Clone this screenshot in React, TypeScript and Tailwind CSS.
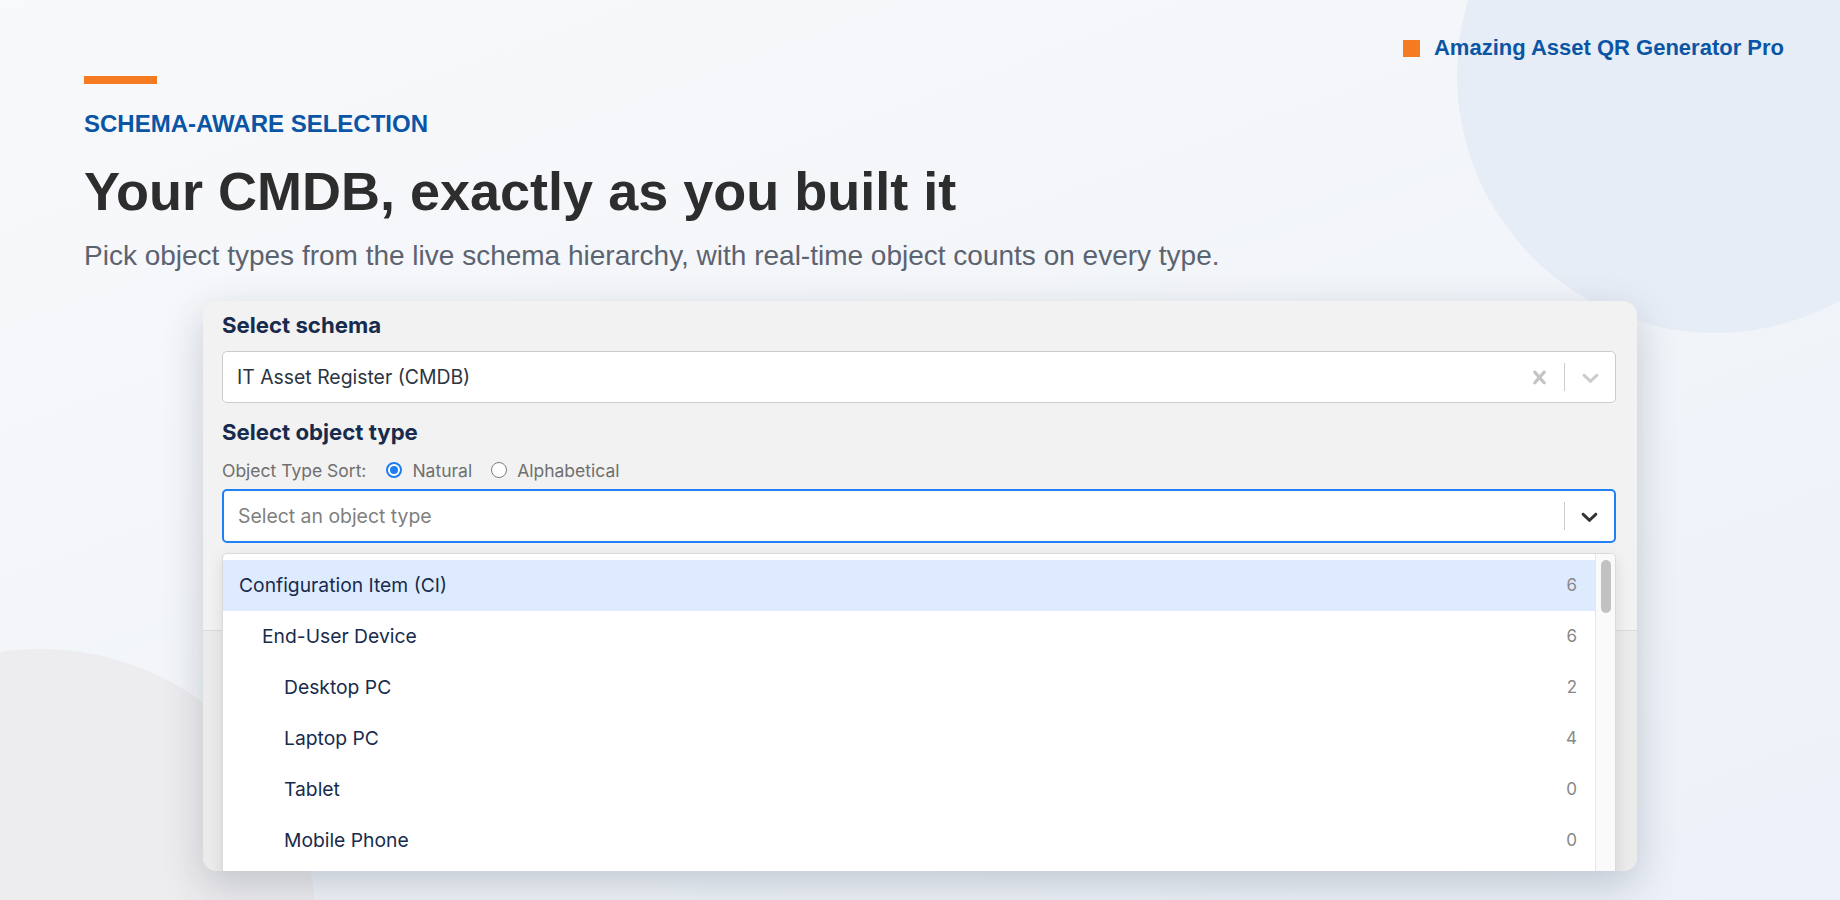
import React from 'react';

interface ObjectTypeOption {
    name: string;
    level: number;
    count: number;
}

const objectTypes: ObjectTypeOption[] = [
    { name: 'Configuration Item (CI)', level: 0, count: 6 },
    { name: 'End-User Device', level: 1, count: 6 },
    { name: 'Desktop PC', level: 2, count: 2 },
    { name: 'Laptop PC', level: 2, count: 4 },
    { name: 'Tablet', level: 2, count: 0 },
    { name: 'Mobile Phone', level: 2, count: 0 },
];

// indent per hierarchy level, written out so Tailwind picks them up
const levelPadding = ['pl-[16px]', 'pl-[39px]', 'pl-[61px]'];

function CrossIcon({ className }: { className?: string }) {
    return (
        <svg viewBox="0 0 20 20" className={className} fill="currentColor" aria-hidden="true">
            <path d="M14.348 14.849c-0.469 0.469-1.229 0.469-1.697 0l-2.651-3.030-2.651 3.029c-0.469 0.469-1.229 0.469-1.697 0-0.469-0.469-0.469-1.229 0-1.697l2.758-3.15-2.759-3.152c-0.469-0.469-0.469-1.228 0-1.697s1.228-0.469 1.697 0l2.652 3.031 2.651-3.031c0.469-0.469 1.228-0.469 1.697 0s0.469 1.229 0 1.697l-2.758 3.152 2.758 3.15c0.469 0.469 0.469 1.229 0 1.698z" />
        </svg>
    );
}

function ChevronIcon({ className }: { className?: string }) {
    return (
        <svg viewBox="0 0 20 20" className={className} fill="currentColor" aria-hidden="true">
            <path d="M4.516 7.548c0.436-0.446 1.043-0.481 1.576 0l3.908 3.747 3.908-3.747c0.533-0.481 1.141-0.446 1.574 0 0.436 0.445 0.408 1.197 0 1.615-0.406 0.418-4.695 4.502-4.695 4.502-0.217 0.223-0.502 0.335-0.787 0.335s-0.57-0.112-0.789-0.335c0 0-4.287-4.084-4.695-4.502s-0.436-1.17 0-1.615z" />
        </svg>
    );
}

function Radio({ checked, label }: { checked: boolean; label: string }) {
    return (
        <label className="flex items-center gap-[10px]">
            {checked ? (
                <span className="flex h-[16px] w-[16px] items-center justify-center rounded-full border-2 border-[#1f7cf2] bg-white">
                    <span className="h-[8px] w-[8px] rounded-full bg-[#1f7cf2]" />
                </span>
            ) : (
                <span className="h-[16px] w-[16px] rounded-full border-[1.5px] border-[#7d7d7d] bg-white" />
            )}
            <span>{label}</span>
        </label>
    );
}

function SchemaSelect() {
    return (
        <div className="flex h-[52px] items-center rounded-[5px] border border-[#cccccc] bg-white">
            <div className="flex-1 pl-[14px] text-[19.4px] leading-none text-[#2b3441]">
                IT Asset Register (CMDB)
            </div>
            <div className="flex h-full items-center">
                <div className="flex w-[49px] justify-center text-[#c4c4c4]">
                    <CrossIcon className="h-[27px] w-[27px]" />
                </div>
                <span className="h-[28px] w-px bg-[#cccccc]" />
                <div className="flex w-[50px] justify-center text-[#cccccc]">
                    <ChevronIcon className="h-[27px] w-[27px]" />
                </div>
            </div>
        </div>
    );
}

function ObjectTypeMenu() {
    return (
        <div className="absolute left-0 right-0 top-full z-10 mt-[10px] flex h-[340px] overflow-hidden rounded-[5px] border border-[#dadada] bg-white shadow-[0_5px_15px_rgba(0,0,0,0.1)]">
            <div className="flex-1 pt-[6px]">
                {objectTypes.map((item, i) => (
                    <div
                        key={item.name}
                        className={`flex h-[51px] items-center justify-between pr-[18px] ${levelPadding[item.level]} ${
                            i === 0 ? 'bg-[#deebff]' : 'bg-white'
                        }`}
                    >
                        <span className="text-[19.3px] leading-none text-[#172b4d]">{item.name}</span>
                        <span className="text-[17px] leading-none text-[#888888]">{item.count}</span>
                    </div>
                ))}
            </div>
            <div className="w-[20px] border-l border-[#e6e6e6] bg-[#fafafa] pl-[5px] pt-[6px]">
                <div className="h-[53px] w-[10px] rounded-full bg-[#c1c1c1]" />
            </div>
        </div>
    );
}

function ObjectTypeSelect() {
    return (
        <div className="relative mt-[9px]">
            <div className="flex h-[54px] items-center rounded-[5px] border-2 border-[#2180f6] bg-white">
                <div className="flex-1 pl-[14px] text-[19.4px] leading-none text-[#808080]">
                    Select an object type
                </div>
                <div className="flex h-full items-center">
                    <span className="h-[28px] w-px bg-[#cccccc]" />
                    <div className="flex w-[49px] justify-center text-[#333333]">
                        <ChevronIcon className="h-[27px] w-[27px]" />
                    </div>
                </div>
            </div>
            <ObjectTypeMenu />
        </div>
    );
}

function SelectorCard() {
    return (
        <div
            className="ml-[119px] mt-[31px] flex h-[570px] w-[1434px] flex-col overflow-hidden rounded-[14px] bg-[#f2f2f2] shadow-[0_14px_40px_rgba(51,65,85,0.24)]"
            style={{ fontFamily: 'Inter, "Noto Sans", sans-serif' }}
        >
            <div className="pl-[19px] pr-[21px] pt-[13px]">
                <h3 className="text-[22.2px] font-bold leading-none text-[#172b4d]">Select schema</h3>
                <div className="mt-[15px]">
                    <SchemaSelect />
                </div>

                <h3 className="mt-[18px] text-[22.2px] font-bold leading-none text-[#172b4d]">Select object type</h3>
                <div className="mt-[17px] flex h-[20px] items-center gap-[19px] text-[17.5px] leading-none text-[#6f6f6f]">
                    <span className="mr-px">Object Type Sort:</span>
                    <Radio checked label="Natural" />
                    <Radio checked={false} label="Alphabetical" />
                </div>

                <ObjectTypeSelect />
            </div>

            {/* form section behind the open menu */}
            <div className="mt-[87px] flex-1 border-t border-[#dcdcdc] bg-[#ebebeb]" />
        </div>
    );
}

export default function App() {
    return (
        <div
            className="relative h-[900px] w-full overflow-hidden bg-[linear-gradient(160deg,#f8f9fb_0%,#f2f5f9_50%,#ecf0f8_100%)]"
            style={{ fontFamily: '"Liberation Sans", Arial, sans-serif' }}
        >
            {/* decorative backdrop circles */}
            <div className="absolute left-[1457px] top-[-183px] h-[516px] w-[516px] rounded-full bg-[#e7edf6]" />
            <div className="absolute left-[-236px] top-[649px] h-[552px] w-[552px] rounded-full bg-[#edecef]" />

            <header className="relative flex justify-end pr-[56px] pt-[37px]">
                <div className="flex items-center gap-[14px]">
                    <span className="h-[17px] w-[17px] bg-[#f47b20]" />
                    <span className="text-[22px] font-bold leading-none text-[#0b55a5]">
                        Amazing Asset QR Generator Pro
                    </span>
                </div>
            </header>

            <main className="relative pl-[84px]">
                <div className="mt-[17px] h-[8px] w-[73px] bg-[#f47b20]" />
                <p className="mt-[28px] text-[24px] font-bold leading-none text-[#0b55a5]">
                    SCHEMA-AWARE SELECTION
                </p>
                <h1 className="mt-[28px] text-[54px] font-bold leading-none text-[#2d2d2d]">
                    Your CMDB, exactly as you built it
                </h1>
                <p className="mt-[24px] text-[28px] leading-none text-[#5c6370]">
                    Pick object types from the live schema hierarchy, with real-time object counts on every type.
                </p>

                <SelectorCard />
            </main>
        </div>
    );
}
